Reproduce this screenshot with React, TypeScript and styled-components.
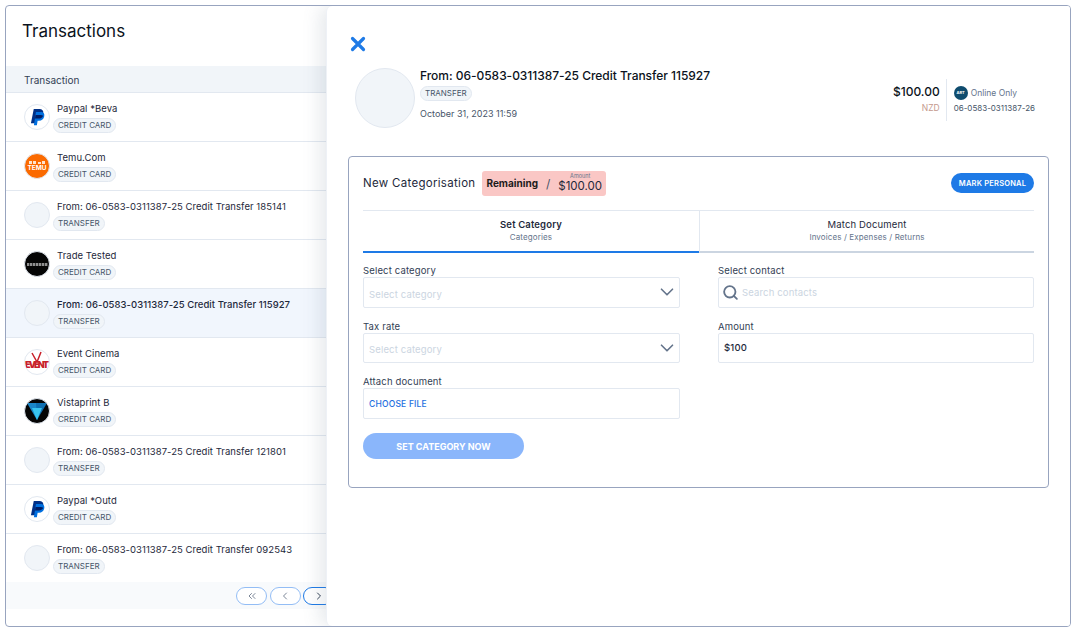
import React from "react"
import styled, { createGlobalStyle } from "styled-components"
import { ChevronDown, ChevronLeft, ChevronRight, ChevronsLeft, Search } from "lucide-react"

const GlobalStyle = createGlobalStyle`
  html, body {
    margin: 0;
    background: #fff;
    font-family: Inter, "Noto Sans", sans-serif;
    color: #0f172a;
  }
`

const Frame = styled.div`
  position: relative;
  box-sizing: border-box;
  margin: 5px 3px 0 5px;
  height: 622px;
  border: 1px solid #98a4bf;
  border-radius: 4px;
  overflow: hidden;
`

const Title = styled.h1`
  margin: 0;
  height: 60px;
  box-sizing: border-box;
  padding: 15px 0 0 16px;
  font-size: 17px;
  line-height: 20px;
  font-weight: 400;
  color: #0b1220;
`

const TableHead = styled.div`
  height: 27px;
  box-sizing: border-box;
  padding-left: 18px;
  background: #f1f5f9;
  border-bottom: 1px solid #e2e8f0;
  font-size: 10px;
  line-height: 28px;
  color: #334155;
`

const Row = styled.div<{ $selected?: boolean }>`
  display: flex;
  align-items: center;
  height: 49px;
  box-sizing: border-box;
  padding: 0 0 0 18px;
  border-bottom: 1px solid #e2e8f0;
  background: ${p => (p.$selected ? "#f1f6fd" : "#fff")};
  &:last-of-type {
    height: 48px;
    border-bottom: 0;
  }
`

const Avatar = styled.div<{ $bg?: string }>`
  flex: none;
  width: 26px;
  height: 26px;
  box-sizing: border-box;
  border-radius: 50%;
  border: 1px solid #e2e8f0;
  background: ${p => p.$bg || "#f1f5f9"};
  overflow: hidden;
  display: flex;
  align-items: center;
  justify-content: center;
`

const RowText = styled.div`
  margin-left: 3px;
  display: flex;
  flex-direction: column;
  align-items: flex-start;
`

const RowName = styled.div<{ $strong?: boolean }>`
  padding-left: 4px;
  margin-bottom: 1px;
  font-size: 9.5px;
  line-height: 13px;
  letter-spacing: 0.05px;
  font-weight: ${p => (p.$strong ? 500 : 400)};
  color: #1e293b;
  white-space: nowrap;
`

const Badge = styled.span`
  display: inline-block;
  height: 15px;
  box-sizing: border-box;
  margin-top: 2px;
  padding: 0 4px;
  border: 1px solid #e2e8f0;
  border-radius: 8px;
  background: #f1f5f9;
  font-size: 8px;
  line-height: 13px;
  color: #475569;
  white-space: nowrap;
`

const Pager = styled.div`
  display: flex;
  align-items: center;
  gap: 2.5px;
  height: 27px;
  padding-left: 230px;
  background: #f8fafc;
`

const PageButton = styled.button<{ $active?: boolean }>`
  flex: none;
  width: 31px;
  height: 18px;
  padding: 0;
  display: flex;
  align-items: center;
  justify-content: center;
  background: #fff;
  border: 1px solid ${p => (p.$active ? "#1e7ae6" : "#93bdf5")};
  border-radius: 9px;
  color: ${p => (p.$active ? "#334155" : "#7c8798")};
`

const Drawer = styled.div`
  position: absolute;
  top: 0;
  right: 0;
  bottom: 0;
  width: 744px;
  box-sizing: border-box;
  padding: 0 21px 0 21px;
  background: #fff;
  border-left: 1px solid #eef1f6;
  border-radius: 6px 0 0 6px;
  box-shadow: -6px 0 18px rgba(100, 116, 139, 0.16);
`

const CloseButton = styled.button`
  display: block;
  margin: 30px 0 0 2px;
  padding: 0;
  width: 16px;
  height: 16px;
  border: 0;
  background: none;
`

const Summary = styled.div`
  display: flex;
  align-items: flex-start;
  height: 88px;
  margin: 16px 14px 0 7px;
`

const BigAvatar = styled.div`
  flex: none;
  width: 60px;
  height: 60px;
  box-sizing: border-box;
  border-radius: 50%;
  border: 1px solid #e2e8f0;
  background: #f1f5f9;
`

const SummaryText = styled.div`
  flex: 1;
  margin-left: 5px;
  display: flex;
  flex-direction: column;
  align-items: flex-start;
`

const SummaryTitle = styled.div`
  font-size: 12px;
  line-height: 16px;
  font-weight: 500;
  letter-spacing: -0.03px;
  color: #0b1220;
  white-space: nowrap;
`

const SummaryDate = styled.div`
  margin-top: 6px;
  font-size: 9px;
  line-height: 14px;
  color: #475569;
`

const Amounts = styled.div`
  width: 60px;
  height: 37px;
  margin-top: 11px;
  padding: 5px 6px 0 0;
  text-align: right;
  border-right: 1px solid #e2e8f0;
`

const AmountValue = styled.div`
  font-size: 12px;
  line-height: 16px;
  font-weight: 500;
  color: #0b1220;
`

const Currency = styled.div`
  margin-top: 2px;
  font-size: 8.5px;
  line-height: 12px;
  color: #c4998e;
`

const Account = styled.div`
  margin: 18px 0 0 7px;
`

const AccountTop = styled.div`
  display: flex;
  align-items: center;
  gap: 3px;
  font-size: 8.5px;
  line-height: 14px;
  color: #64748b;
`

const AccountLogo = styled.div`
  width: 14px;
  height: 14px;
  border-radius: 50%;
  background: #0f4c6e;
  color: #fff;
  font-size: 4px;
  font-weight: 700;
  line-height: 14px;
  text-align: center;
`

const AccountNumber = styled.div`
  margin-top: 2px;
  font-size: 8px;
  line-height: 12px;
  color: #475569;
`

const Card = styled.div`
  height: 332px;
  box-sizing: border-box;
  padding: 0 14px;
  border: 1px solid #98a4bf;
  border-radius: 4px;
`

const CardHead = styled.div`
  display: flex;
  align-items: center;
  height: 52px;
  margin-bottom: 1px;
`

const CardTitle = styled.div`
  font-size: 11.5px;
  letter-spacing: 0.3px;
  color: #1e293b;
`

const Remaining = styled.div`
  display: flex;
  align-items: center;
  height: 25px;
  margin-left: 7px;
  padding: 0 4px;
  border-radius: 3px;
  background: #fac7c5;
`

const RemainingLabel = styled.div`
  font-size: 10px;
  font-weight: 700;
  color: #1e1b1b;
`

const Slash = styled.div`
  margin: 0 8px;
  font-size: 12px;
  color: #475569;
`

const RemainingAmount = styled.div`
  text-align: center;
  font-size: 11.5px;
  line-height: 13px;
  color: #1e293b;
`

const RemainingCaption = styled.div`
  font-size: 5.5px;
  line-height: 7px;
  color: #64748b;
`

const MarkButton = styled.button`
  margin-left: auto;
  width: 83px;
  height: 20px;
  padding: 0;
  border: 0;
  border-radius: 10px;
  background: #1e7ae6;
  color: #fff;
  font: inherit;
  font-size: 7.5px;
  font-weight: 600;
  letter-spacing: 0.2px;
`

const Tabs = styled.div`
  display: grid;
  grid-template-columns: 336px 335px;
  height: 42px;
  border-top: 1px solid #e2e8f0;
`

const Tab = styled.div<{ $active?: boolean }>`
  box-sizing: border-box;
  padding-top: 7px;
  text-align: center;
  border-bottom: 2px solid ${p => (p.$active ? "#1e7ae6" : "#cbd5e1")};
  border-left: ${p => (p.$active ? "0" : "1px solid #e2e8f0")};
`

const TabName = styled.div<{ $active?: boolean }>`
  font-size: 9.5px;
  line-height: 14px;
  font-weight: ${p => (p.$active ? 600 : 400)};
  letter-spacing: 0.15px;
  color: #1e293b;
`

const TabSub = styled.div`
  font-size: 8px;
  line-height: 11px;
  letter-spacing: 0.12px;
  color: #64748b;
`

const FormGrid = styled.div`
  display: grid;
  grid-template-columns: 317px 316px;
  column-gap: 38px;
  margin-top: 11px;
`

const Column = styled.div`
  display: flex;
  flex-direction: column;
`

const Field = styled.div`
  height: 55.5px;
`

const Label = styled.div`
  height: 13px;
  font-size: 9.5px;
  line-height: 14px;
  letter-spacing: 0.15px;
  color: #334155;
`

const Control = styled.div`
  display: flex;
  align-items: center;
  height: 30.5px;
  box-sizing: border-box;
  padding: 0 1px 0 5px;
  border: 1px solid #e2e8f0;
  border-radius: 2px;
  font-size: 9.5px;
  letter-spacing: 0.15px;
`

const Placeholder = styled.span`
  flex: 1;
  color: #cbd5e1;
`

const SelectText = styled(Placeholder)`
  padding-top: 4px;
`

const SearchIcon = styled(Search)`
  flex: none;
  margin: 0 3px 0 -2px;
`

const Value = styled.span`
  font-weight: 500;
  color: #1e293b;
`

const FileLink = styled.span`
  padding-top: 1px;
  font-size: 8.5px;
  font-weight: 500;
  letter-spacing: 0.2px;
  color: #1d6fe0;
`

const SubmitButton = styled.button`
  display: block;
  width: 161px;
  height: 26px;
  margin-top: 2.5px;
  padding: 0;
  border: 0;
  border-radius: 13px;
  background: #8ab6fb;
  color: #fff;
  font: inherit;
  font-size: 9px;
  font-weight: 700;
`

const PaypalLogo = () => (
  <svg width="15" height="18" viewBox="0 0 24 28">
    <path d="M6 1h9c4.500 0 7 2.600 6.200 6.800-.9 4.700-4.200 7.200-8.700 7.200H9.800L8.400 24H1.500z" fill="#003087" />
    <path d="M9.500 6h9c3.400.6 5 3 4.300 6.600-.9 4.500-4 7.200-8.500 7.200h-2.100L11 27H6.200z" fill="#0070e0" />
    <path d="M8.900 10.800h8.300c1.500 0 2.900.4 3.800 1.100-.6 2.300-3.500 4.600-6.900 4.600H8z" fill="#001c64" />
  </svg>
)

const TemuMark = styled.div`
  display: flex;
  flex-direction: column;
  align-items: center;
  gap: 1px;
  font-size: 6.5px;
  line-height: 7px;
  font-weight: 700;
  color: #fff;
`

const TemuLogo = () => (
  <TemuMark>
    <svg width="16" height="3" viewBox="0 0 16 3">
      <path d="M0 0h3v3H0zM4 0h3v3H4zM9 1h3v2H9zM13 0h3v3h-3z" fill="#ffe3cc" />
    </svg>
    TEMU
  </TemuMark>
)

const TradeBar = styled.div`
  width: 21px;
  height: 3px;
  background: repeating-linear-gradient(90deg, #8f8f8f 0 2px, #3a3a3a 2px 3px);
`

const EventLogo = () => (
  <svg width="24" height="24" viewBox="0 0 24 24">
    <path d="M7 3l5 9 4-10" fill="none" stroke="#c8202a" strokeWidth="1.500" />
    <text x="12" y="18" textAnchor="middle" textLength="24" fontSize="9" fontWeight="900" fill="#c8202a" fontFamily="Inter, sans-serif">
      EVENT
    </text>
  </svg>
)

const VistaLogo = () => (
  <svg width="20" height="18" viewBox="0 0 20 18">
    <path d="M0 1h11l-1 17z" fill="#1a86c8" />
    <path d="M20 1H9l1 17z" fill="#0f6fb0" />
    <path d="M5 6h10l-5 12z" fill="#38c4ef" />
  </svg>
)

const cc = "CREDIT CARD"
const tr = "TRANSFER"

const rows: { name: string; type: string; bg?: string; logo?: React.ReactNode; selected?: boolean }[] = [
  { name: "Paypal *Beva", type: cc, bg: "#fff", logo: <PaypalLogo /> },
  { name: "Temu.Com", type: cc, bg: "#fb6a00", logo: <TemuLogo /> },
  { name: "From: 06-0583-0311387-25 Credit Transfer 185141", type: tr },
  { name: "Trade Tested", type: cc, bg: "#050505", logo: <TradeBar /> },
  { name: "From: 06-0583-0311387-25 Credit Transfer 115927", type: tr, selected: true },
  { name: "Event Cinema", type: cc, bg: "#fff", logo: <EventLogo /> },
  { name: "Vistaprint B", type: cc, bg: "#050505", logo: <VistaLogo /> },
  { name: "From: 06-0583-0311387-25 Credit Transfer 121801", type: tr },
  { name: "Paypal *Outd", type: cc, bg: "#fff", logo: <PaypalLogo /> },
  { name: "From: 06-0583-0311387-25 Credit Transfer 092543", type: tr }
]

const App: React.FC = () => {
  return (
    <Frame>
      <GlobalStyle />
      <Title>Transactions</Title>
      <TableHead>Transaction</TableHead>
      <div>
        {rows.map(row => (
          <Row key={row.name} $selected={row.selected}>
            <Avatar $bg={row.bg}>{row.logo}</Avatar>
            <RowText>
              <RowName $strong={row.selected}>{row.name}</RowName>
              <Badge>{row.type}</Badge>
            </RowText>
          </Row>
        ))}
      </div>
      <Pager>
        <PageButton>
          <ChevronsLeft size={12} />
        </PageButton>
        <PageButton>
          <ChevronLeft size={12} />
        </PageButton>
        <PageButton $active>
          <ChevronRight size={12} />
        </PageButton>
      </Pager>

      <Drawer>
        <CloseButton aria-label="Close">
          <svg width="16" height="16" viewBox="0 0 16 16">
            <path d="M2.500 2.500l11 11M13.500 2.500l-11 11" stroke="#1e7ae6" strokeWidth="3.200" strokeLinecap="round" />
          </svg>
        </CloseButton>
        <Summary>
          <BigAvatar />
          <SummaryText>
            <SummaryTitle>From: 06-0583-0311387-25 Credit Transfer 115927</SummaryTitle>
            <Badge>TRANSFER</Badge>
            <SummaryDate>October 31, 2023 11:59</SummaryDate>
          </SummaryText>
          <Amounts>
            <AmountValue>$100.00</AmountValue>
            <Currency>NZD</Currency>
          </Amounts>
          <Account>
            <AccountTop>
              <AccountLogo>ART</AccountLogo>
              Online Only
            </AccountTop>
            <AccountNumber>06-0583-0311387-26</AccountNumber>
          </Account>
        </Summary>

        <Card>
          <CardHead>
            <CardTitle>New Categorisation</CardTitle>
            <Remaining>
              <RemainingLabel>Remaining</RemainingLabel>
              <Slash>/</Slash>
              <RemainingAmount>
                <RemainingCaption>Amount</RemainingCaption>
                $100.00
              </RemainingAmount>
            </Remaining>
            <MarkButton>MARK PERSONAL</MarkButton>
          </CardHead>
          <Tabs>
            <Tab $active>
              <TabName $active>Set Category</TabName>
              <TabSub>Categories</TabSub>
            </Tab>
            <Tab>
              <TabName>Match Document</TabName>
              <TabSub>Invoices / Expenses / Returns</TabSub>
            </Tab>
          </Tabs>
          <FormGrid>
            <Column>
              <Field>
                <Label>Select category</Label>
                <Control>
                  <SelectText>Select category</SelectText>
                  <ChevronDown size={22} color="#64748b" strokeWidth={1.8} />
                </Control>
              </Field>
              <Field>
                <Label>Tax rate</Label>
                <Control>
                  <SelectText>Select category</SelectText>
                  <ChevronDown size={22} color="#64748b" strokeWidth={1.8} />
                </Control>
              </Field>
              <Field>
                <Label>Attach document</Label>
                <Control>
                  <FileLink>CHOOSE FILE</FileLink>
                </Control>
              </Field>
            </Column>
            <Column>
              <Field>
                <Label>Select contact</Label>
                <Control>
                  <SearchIcon size={17} color="#64748b" strokeWidth={2.6} />
                  <Placeholder>Search contacts</Placeholder>
                </Control>
              </Field>
              <Field>
                <Label>Amount</Label>
                <Control>
                  <Value>$100</Value>
                </Control>
              </Field>
            </Column>
          </FormGrid>
          <SubmitButton>SET CATEGORY NOW</SubmitButton>
        </Card>
      </Drawer>
    </Frame>
  )
}

export default App
